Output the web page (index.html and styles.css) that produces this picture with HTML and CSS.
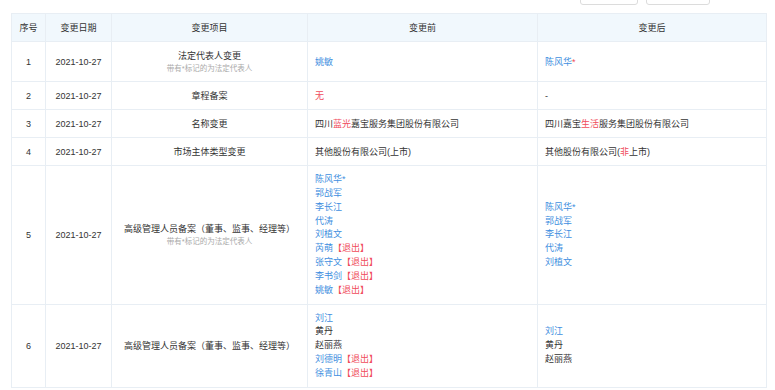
FILE: index.html
```html
<!DOCTYPE html>
<html lang="zh-CN">
<head>
<meta charset="utf-8">
<link rel="stylesheet" href="styles.css">
</head>
<body>
<div class="page">
  <div class="toolbar">
    <span class="btn btn-a"></span>
    <span class="btn btn-b"></span>
  </div>
  <table class="grid">
    <colgroup>
      <col class="c-no"><col class="c-date"><col class="c-item"><col class="c-before"><col class="c-after">
    </colgroup>
    <thead>
      <tr><th>序号</th><th>变更日期</th><th>变更项目</th><th>变更前</th><th>变更后</th></tr>
    </thead>
    <tbody>
      <tr>
        <td class="ctr">1</td><td class="ctr">2021-10-27</td>
        <td class="ctr">法定代表人变更<div class="note">带有*标记的为法定代表人</div></td>
        <td><span class="link">姚敏</span></td>
        <td><span class="link">陈风华</span><span class="red">*</span></td>
      </tr>
      <tr>
        <td class="ctr">2</td><td class="ctr">2021-10-27</td>
        <td class="ctr">章程备案</td>
        <td><span class="red">无</span></td>
        <td>-</td>
      </tr>
      <tr>
        <td class="ctr">3</td><td class="ctr">2021-10-27</td>
        <td class="ctr">名称变更</td>
        <td>四川<span class="red">蓝光</span>嘉宝服务集团股份有限公司</td>
        <td>四川嘉宝<span class="red">生活</span>服务集团股份有限公司</td>
      </tr>
      <tr>
        <td class="ctr">4</td><td class="ctr">2021-10-27</td>
        <td class="ctr">市场主体类型变更</td>
        <td>其他股份有限公司(上市)</td>
        <td>其他股份有限公司(<span class="red">非</span>上市)</td>
      </tr>
      <tr>
        <td class="ctr">5</td><td class="ctr">2021-10-27</td>
        <td class="ctr">高级管理人员备案（董事、监事、经理等）<div class="note">带有*标记的为法定代表人</div></td>
        <td>
          <div class="line"><span class="link">陈风华*</span></div>
          <div class="line"><span class="link">郭战军</span></div>
          <div class="line"><span class="link">李长江</span></div>
          <div class="line"><span class="link">代涛</span></div>
          <div class="line"><span class="link">刘植文</span></div>
          <div class="line"><span class="link">芮萌</span><span class="red">【退出】</span></div>
          <div class="line"><span class="link">张守文</span><span class="red">【退出】</span></div>
          <div class="line"><span class="link">李书剑</span><span class="red">【退出】</span></div>
          <div class="line"><span class="link">姚敏</span><span class="red">【退出】</span></div>
        </td>
        <td>
          <div class="line"><span class="link">陈风华*</span></div>
          <div class="line"><span class="link">郭战军</span></div>
          <div class="line"><span class="link">李长江</span></div>
          <div class="line"><span class="link">代涛</span></div>
          <div class="line"><span class="link">刘植文</span></div>
        </td>
      </tr>
      <tr>
        <td class="ctr">6</td><td class="ctr">2021-10-27</td>
        <td class="ctr">高级管理人员备案（董事、监事、经理等）</td>
        <td>
          <div class="line"><span class="link">刘江</span></div>
          <div class="line">黄丹</div>
          <div class="line">赵丽燕</div>
          <div class="line"><span class="link">刘德明</span><span class="red">【退出】</span></div>
          <div class="line"><span class="link">徐青山</span><span class="red">【退出】</span></div>
        </td>
        <td>
          <div class="line"><span class="link">刘江</span></div>
          <div class="line">黄丹</div>
          <div class="line">赵丽燕</div>
        </td>
      </tr>
    </tbody>
  </table>
</div>
</body>
</html>
```
FILE: styles.css
```css
html, body {
  margin: 0;
  padding: 0;
  background: #fff;
}
body {
  font-family: "Liberation Sans", "Noto Sans CJK SC", sans-serif;
  font-size: 9px;
  color: #333;
}
.page {
  padding: 0 9px 0 11px;
}
.toolbar {
  height: 5px;
  overflow: hidden;
  display: flex;
  align-items: flex-end;
  justify-content: flex-end;
  gap: 8px;
  padding-right: 56px;
}
.btn {
  display: block;
  height: 24px;
  border: 1px solid #dcdcdc;
  border-radius: 3px;
  box-sizing: border-box;
  flex: none;
}
.btn-a { width: 58px; }
.btn-b { width: 64px; }
.grid {
  margin-top: 8px;
  width: 755px;
  border-collapse: collapse;
  table-layout: fixed;
}
.c-no { width: 34px; }
.c-date { width: 66px; }
.c-item { width: 196px; }
.c-before { width: 230px; }
.c-after { width: 229px; }
.grid th, .grid td {
  border: 1px solid #e8eef4;
  line-height: 14px;
  vertical-align: middle;
}
.grid th {
  background: #f1f8fd;
  font-weight: normal;
  height: 27px;
  padding: 0 4px;
  text-align: center;
}
.grid td {
  padding: 7px 6px 6px 7px;
  text-align: left;
}
.grid td.ctr {
  text-align: center;
  padding: 7px 4px 6px;
}
.note {
  font-size: 7.5px;
  line-height: 12px;
  color: #aaa;
}
.line {
  line-height: 13.85px;
}
.link { color: #3f8fe0; }
.red { color: #f04c5c; }
```
